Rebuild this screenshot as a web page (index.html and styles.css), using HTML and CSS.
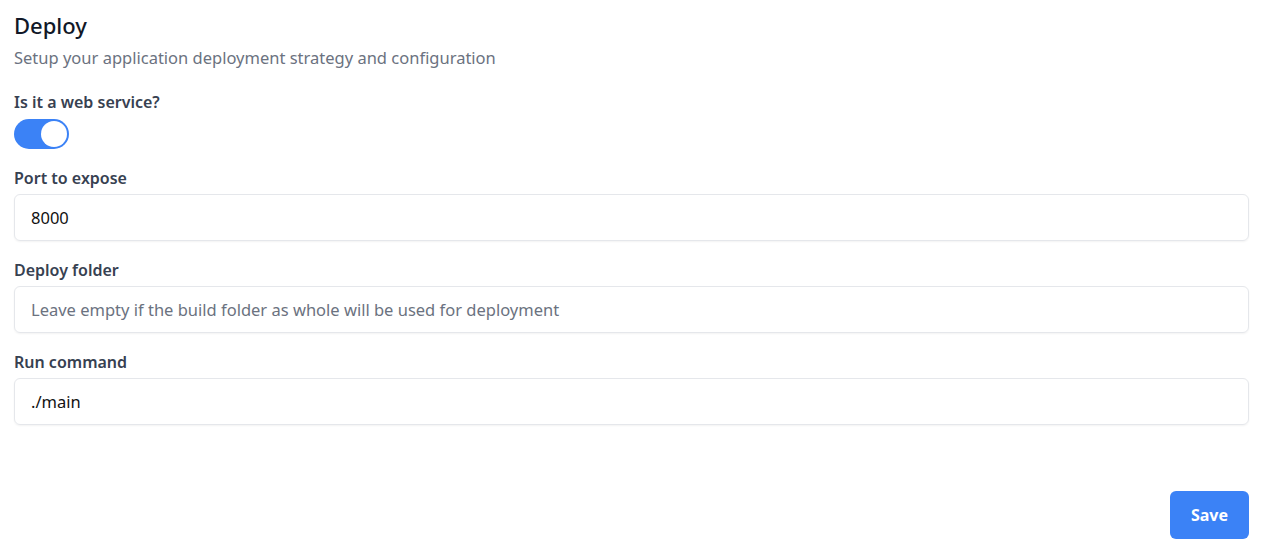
FILE: index.html
```
<!DOCTYPE html>
<html>
<head>
<meta charset="utf-8">
<link rel="stylesheet" href="styles.css">
</head>
<body>
<div class="page">
  <h1 class="title">Deploy</h1>
  <p class="subtitle">Setup your application deployment strategy and configuration</p>
  <div class="field">
    <label class="label">Is it a web service?</label>
    <div class="toggle"><span class="knob"></span></div>
  </div>
  <div class="field">
    <label class="label">Port to expose</label>
    <div class="input">8000</div>
  </div>
  <div class="field">
    <label class="label">Deploy folder</label>
    <div class="input placeholder">Leave empty if the build folder as whole will be used for deployment</div>
  </div>
  <div class="field">
    <label class="label">Run command</label>
    <div class="input">./main</div>
  </div>
  <div class="actions">
    <button class="save">Save</button>
  </div>
</div>
</body>
</html>
```
FILE: styles.css
```
* { box-sizing: border-box; }
body {
  margin: 0;
  background: #fff;
  font-family: "Noto Sans", "Open Sans", sans-serif;
  color: #111827;
}
.page {
  padding: 10px 21px 0 14px;
  display: flex;
  flex-direction: column;
}
.title {
  margin: 0;
  font-size: 22px;
  line-height: 30px;
  font-weight: 500;
  color: #111827;
}
.subtitle {
  margin: 6px 0 0;
  font-size: 16.5px;
  line-height: 24px;
  color: #6b7280;
}
.field {
  display: flex;
  flex-direction: column;
  margin-top: 21px;
}
.field + .field { margin-top: 18px; }
.label {
  font-size: 16px;
  line-height: 22px;
  font-weight: 600;
  color: #374151;
  margin-bottom: 5px;
}
.toggle {
  width: 55px;
  height: 30px;
  margin-top: 1px;
  border-radius: 15px;
  background: #3b82f6;
  position: relative;
}
.knob {
  position: absolute;
  right: 2px;
  top: 2px;
  width: 26px;
  height: 26px;
  border-radius: 50%;
  background: #fff;
}
.input {
  height: 47px;
  border: 1px solid #e5e7eb;
  border-radius: 6px;
  box-shadow: 0 1px 2px rgba(0,0,0,0.05);
  padding: 0 16px;
  display: flex;
  align-items: center;
  font-size: 16.5px;
  color: #111;
}
.placeholder { color: #6b7280; }
.actions {
  display: flex;
  justify-content: flex-end;
  margin-top: 66px;
}
.save {
  width: 79px;
  height: 48px;
  border: none;
  border-radius: 6px;
  background: #3b82f6;
  color: #fff;
  font-family: inherit;
  font-size: 16px;
  font-weight: 700;
}
```
